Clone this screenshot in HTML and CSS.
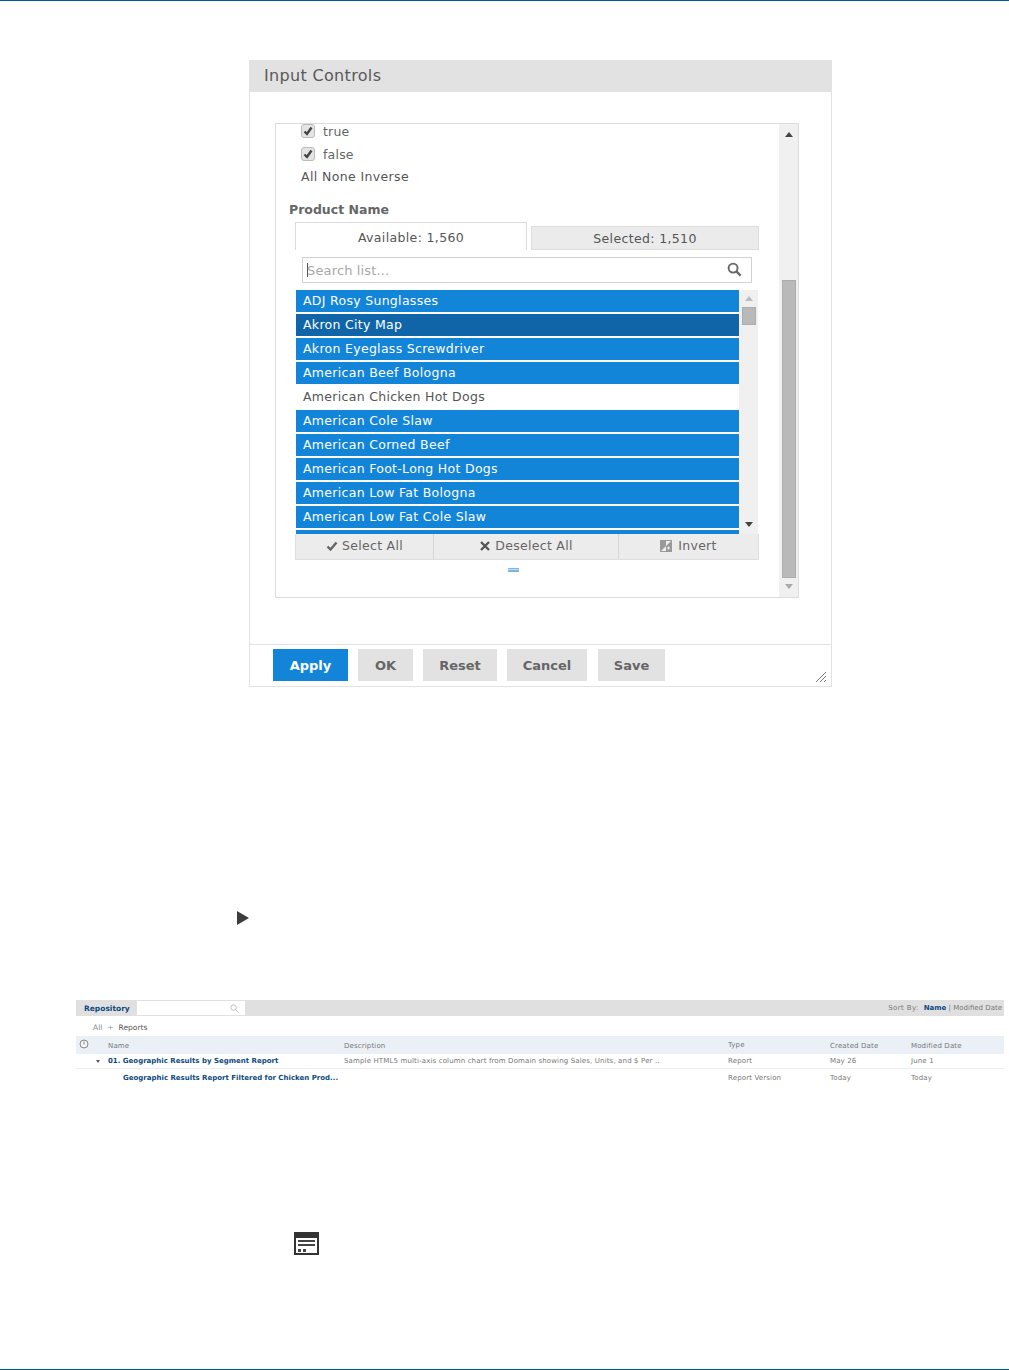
FILE: index.html
```html
<!DOCTYPE html>
<html lang="en">
<head>
<meta charset="utf-8">
<title>Input Controls</title>
<link rel="stylesheet" href="styles.css">
</head>
<body>
<div class="page">
  <div class="rule"></div>
  <section class="dialog">
    <h2 class="dialog-title">Input Controls</h2>
    <div class="dialog-body">
      <div class="frame">
        <div class="frame-content">
          <div class="check-row first"><span class="check"><svg viewBox="0 0 10 10"><path d="M1.500 5.500 4 8 8.500 1.500" fill="none" stroke="#444" stroke-width="2.400"/></svg></span>true</div>
          <div class="check-row"><span class="check"><svg viewBox="0 0 10 10"><path d="M1.500 5.500 4 8 8.500 1.500" fill="none" stroke="#444" stroke-width="2.400"/></svg></span>false</div>
          <div class="links">All None Inverse</div>
          <div class="field-label">Product Name</div>
          <div class="multi">
            <div class="tabs">
              <div class="tab active">Available: 1,560</div>
              <div class="tab">Selected: 1,510</div>
            </div>
            <div class="search">
              <span class="caret"></span><span class="placeholder">Search list...</span>
              <svg class="search-icon" viewBox="0 0 16 16"><circle cx="6.500" cy="6.500" r="4.800" fill="none" stroke="#666" stroke-width="2"/><path d="M10 10l4.500 4.500" stroke="#666" stroke-width="2.400"/></svg>
            </div>
            <div class="list-wrap">
              <ul class="list">
                <li class="sel">ADJ Rosy Sunglasses</li>
                <li class="cur">Akron City Map</li>
                <li class="sel">Akron Eyeglass Screwdriver</li>
                <li class="sel">American Beef Bologna</li>
                <li>American Chicken Hot Dogs</li>
                <li class="sel">American Cole Slaw</li>
                <li class="sel">American Corned Beef</li>
                <li class="sel">American Foot-Long Hot Dogs</li>
                <li class="sel">American Low Fat Bologna</li>
                <li class="sel">American Low Fat Cole Slaw</li>
                <li class="sel tail"></li>
              </ul>
              <div class="mini-scroll">
                <span class="arrow up small"></span>
                <span class="mini-thumb"></span>
                <span class="arrow down dark"></span>
              </div>
            </div>
            <div class="actions">
              <div class="action a1"><svg viewBox="0 0 12 12"><path d="M1.500 6.500 4.500 9.500 10.500 2.500" fill="none" stroke="#666" stroke-width="2.400"/></svg>Select All</div>
              <div class="action a2"><svg viewBox="0 0 12 12"><path d="M2 2l8 8M10 2l-8 8" stroke="#555" stroke-width="2.400"/></svg>Deselect All</div>
              <div class="action a3"><svg viewBox="0 0 12 12"><rect width="12" height="12" fill="#999"/><path d="M1 11 6 6V11ZM11 1 6 6V1Z" fill="#eee"/><path d="M7 8h3M8.500 6.500v3" stroke="#eee"/></svg>Invert</div>
            </div>
          </div>
          <div class="grip"></div>
        </div>
        <div class="frame-scroll">
          <span class="arrow up"></span>
          <span class="frame-thumb"></span>
          <span class="arrow down"></span>
        </div>
      </div>
    </div>
    <div class="dialog-footer">
      <button class="btn primary">Apply</button>
      <button class="btn ok">OK</button>
      <button class="btn reset">Reset</button>
      <button class="btn cancel">Cancel</button>
      <button class="btn save">Save</button>
      <svg class="resize" viewBox="0 0 10 10"><path d="M0 10 10 0M4 10l6-6M8 10l2-2" stroke="#777" stroke-width="1"/></svg>
    </div>
  </section>

  <svg class="play" viewBox="0 0 12 14"><path d="M0 0 12 7 0 14Z" fill="#3c3c3c"/></svg>

  <section class="repo">
    <div class="repo-bar">
      <strong class="repo-title">Repository</strong>
      <div class="repo-search"><svg viewBox="0 0 10 10"><circle cx="4" cy="4" r="3" fill="none" stroke="#bbb"/><path d="M6.300 6.300 9.500 9.500" stroke="#bbb"/></svg></div>
      <div class="sort"><span class="sort-label">Sort By:</span><b>Name</b> | Modified Date</div>
    </div>
    <div class="crumbs"><span class="muted">All</span><span class="sep">+</span><span>Reports</span></div>
    <div class="row head">
      <svg class="clock" viewBox="0 0 10 10"><circle cx="5" cy="5" r="4" fill="#f4f4f4" stroke="#888"/><path d="M5 2.500V5.500" stroke="#888"/></svg>
      <span>Name</span><span>Description</span><span class="up1">Type</span><span>Created Date</span><span>Modified Date</span>
    </div>
    <div class="row r1">
      <span class="twist"></span>
      <a>01. Geographic Results by Segment Report</a>
      <span>Sample HTML5 multi-axis column chart from Domain showing Sales, Units, and $ Per ..</span>
      <span>Report</span><span>May 26</span><span>June 1</span>
    </div>
    <div class="row r2">
      <span></span>
      <a class="indent">Geographic Results Report Filtered for Chicken Prod...</a>
      <span></span>
      <span>Report Version</span><span>Today</span><span>Today</span>
    </div>
  </section>

  <svg class="view-icon" viewBox="0 0 25 23">
    <rect x="0" y="0" width="25" height="23" fill="#333"/>
    <rect x="2" y="6" width="21" height="15" fill="#fff"/>
    <rect x="4" y="8" width="17" height="2" fill="#444"/>
    <rect x="4" y="12" width="17" height="2" fill="#444"/>
    <rect x="4" y="17" width="3" height="3" fill="#444"/>
    <rect x="9" y="17" width="3" height="3" fill="#444"/>
  </svg>
  <div class="rule bottom"></div>
</div>
</body>
</html>
```

FILE: styles.css
```css
* { box-sizing: border-box; }
html, body { margin: 0; padding: 0; background: #fff; }
body { font-family: "DejaVu Sans", Verdana, sans-serif; color: #555; }
.page { width: 1009px; height: 1370px; display: flex; flex-direction: column; overflow: hidden; }
.rule { height: 1px; background: #005a8c; flex: none; }
.rule.bottom { margin-top: 114px; }

.dialog { width: 583px; height: 627px; margin: 59px 0 0 249px; border: 1px solid #e2e2e2; display: flex; flex-direction: column; flex: none; }
.dialog-title { margin: 0; height: 31px; background: #e2e2e2; font-size: 16px; font-weight: 400; line-height: 29px; letter-spacing: .33px; padding-left: 14px; color: #595959; flex: none; }
.dialog-body { flex: 1; padding: 31px 32px 0 25px; }
.dialog-footer { height: 42px; border-top: 1px solid #e2e2e2; display: flex; align-items: flex-start; padding: 4px 0 0 23px; position: relative; flex: none; }

.frame { height: 475px; width: 524px; border: 1px solid #dcdcdc; display: flex; }
.frame-content { width: 503px; padding-left: 13px; flex: none; }
.frame-scroll { width: 19px; background: #f0f0f0; display: flex; flex-direction: column; align-items: center; flex: none; }
.frame-scroll .arrow.up { margin-top: 8px; border-bottom-color: #444; }
.frame-thumb { width: 14px; height: 298px; background: #b9b9b9; border: 1px solid #acacac; margin-top: 143px; }
.frame-scroll .arrow.down { margin-top: 6px; border-top-color: #aaa; }
.arrow { width: 0; height: 0; border-left: 4px solid transparent; border-right: 4px solid transparent; display: block; }
.arrow.up { border-bottom: 5px solid #bbb; }
.arrow.down { border-top: 5px solid #bbb; }
.arrow.dark { border-top-color: #444; }

.check-row { display: flex; font-size: 12.5px; padding-left: 12px; gap: 8px; color: #666; letter-spacing: .2px; height: 15px; margin-bottom: 7px; align-items: flex-start; }
.check-row.first { margin-bottom: 8px; }
.check { width: 14px; height: 14px; border: 1px solid #bbb; border-radius: 3px; background: #e4e4e4; display: block; flex: none; padding: 1px; }
.check svg { display: block; width: 10px; height: 10px; }
.links { font-size: 12.5px; line-height: 16px; padding-left: 12px; color: #555; letter-spacing: .37px; }
.field-label { font-size: 12.5px; font-weight: 700; line-height: 16px; margin-top: 17px; color: #666; }

.multi { width: 464px; margin: 4px 0 0 6px; }
.tabs { height: 28px; display: flex; align-items: flex-end; gap: 4px; }
.tab { flex: none; text-align: center; font-size: 12.5px; letter-spacing: .35px; }
.tab.active { width: 232px; height: 28px; border: 1px solid #ddd; border-bottom: 0; background: #fff; line-height: 29px; }
.tab:not(.active) { width: 228px; height: 24px; border: 1px solid #ddd; background: #ebebeb; line-height: 24px; }
.search { height: 26px; margin: 7px 7px 0 7px; border: 1px solid #d2d2d2; display: flex; align-items: center; padding-left: 4px; position: relative; font-size: 13px; letter-spacing: .15px; }
.caret { width: 1px; height: 14px; background: #555; flex: none; }
.placeholder { color: #a8a8a8; margin-left: -1px; }
.search-icon { width: 15px; height: 15px; position: absolute; right: 9px; top: 4px; }
.list-wrap { display: flex; height: 244px; margin-top: 7px; }
.list { list-style: none; margin: 0 0 0 1px; padding: 0; width: 443px; overflow: hidden; }
.list li { height: 22px; margin: 0 0 2px; padding-left: 7px; font-size: 12.5px; line-height: 22px; color: #555; background: #fff; letter-spacing: .3px; }
.list li.sel { background: #1385d8; color: #fff; }
.list li.cur { background: #0f65a8; color: #fff; }
.list li.tail { height: 4px; }
.mini-scroll { width: 19px; background: #f0f0f0; display: flex; flex-direction: column; align-items: center; padding-top: 6px; margin-right: 1px; }
.mini-thumb { width: 14px; height: 18px; background: #b9b9b9; border: 1px solid #acacac; margin-top: 6px; }
.mini-scroll .arrow.down { margin-top: 197px; }
.actions { height: 26px; display: flex; background: #ececec; border: 1px solid #dedede; border-top: 0; }
.action { display: flex; align-items: center; justify-content: center; gap: 4px; font-size: 12.5px; color: #666; flex: none; border-right: 1px solid #d6d6d6; letter-spacing: .3px; padding-bottom: 2px; }
.action svg { width: 12px; height: 12px; flex: none; }
.a1 { width: 138px; }
.a2 { width: 185px; }
.a3 { width: 139px; border-right: 0; gap: 6px; }
.grip { width: 11px; height: 4px; margin: 8px 0 0 219px; background: linear-gradient(#7db4e2 0 1px, #c4def2 1px 2px, #7db4e2 2px); }

.btn { height: 32px; border: 0; background: #e2e2e2; color: #666; font: 700 13px "DejaVu Sans", Verdana, sans-serif; padding: 0; flex: none; }
.btn.primary { width: 75px; background: #1385d8; color: #fff; margin-right: 10px; }
.btn.ok { width: 55px; margin-right: 10px; }
.btn.reset { width: 74px; margin-right: 10px; }
.btn.cancel { width: 80px; margin-right: 11px; }
.btn.save { width: 67px; }
.resize { position: absolute; right: 5px; bottom: 4px; width: 10px; height: 10px; }

.play { width: 12px; height: 14px; margin: 224px 0 0 237px; flex: none; }

.repo { width: 928px; margin: 75px 0 0 76px; flex: none; font-size: 7px; color: #777; }
.repo-bar { height: 16px; background: #e0e0e0; display: flex; align-items: center; position: relative; }
.repo-title { width: 61px; padding-left: 8px; color: #0c4a80; font-size: 7.5px; flex: none; }
.repo-search { width: 108px; height: 14px; background: #fff; display: flex; align-items: center; justify-content: flex-end; padding-right: 6px; }
.repo-search svg { width: 9px; height: 9px; }
.sort { margin-left: auto; padding-right: 2px; }
.sort-label { letter-spacing: .4px; margin-right: 5px; }
.sort b { color: #0c4a80; }
.crumbs { height: 20px; padding: 2px 0 0 17px; display: flex; align-items: center; gap: 5px; color: #555; font-size: 7.5px; }
.muted { color: #888; }
.sep { color: #aaa; }
.row { display: grid; grid-template-columns: 32px 236px 384px 102px 81px 93px; align-items: center; letter-spacing: .14px; }
.row a { letter-spacing: 0; }
.row.head { height: 18px; background: #ebf0f7; padding-top: 2px; }
.row.r1 { height: 15px; border-bottom: 1px solid #eee; }
.row.r2 { height: 17px; }
.row a { color: #0c4a80; font-weight: 700; white-space: nowrap; }
.row span { white-space: nowrap; }
.row a.indent { margin-left: 15px; }
.up1 { position: relative; top: -1px; }
.clock { width: 10px; height: 10px; margin: -4px 0 0 3px; }
.twist { width: 0; height: 0; border-left: 2px solid transparent; border-right: 2px solid transparent; border-top: 3px solid #555; margin-left: 20px; }

.view-icon { width: 25px; height: 23px; margin: 146px 0 0 294px; flex: none; }
```
